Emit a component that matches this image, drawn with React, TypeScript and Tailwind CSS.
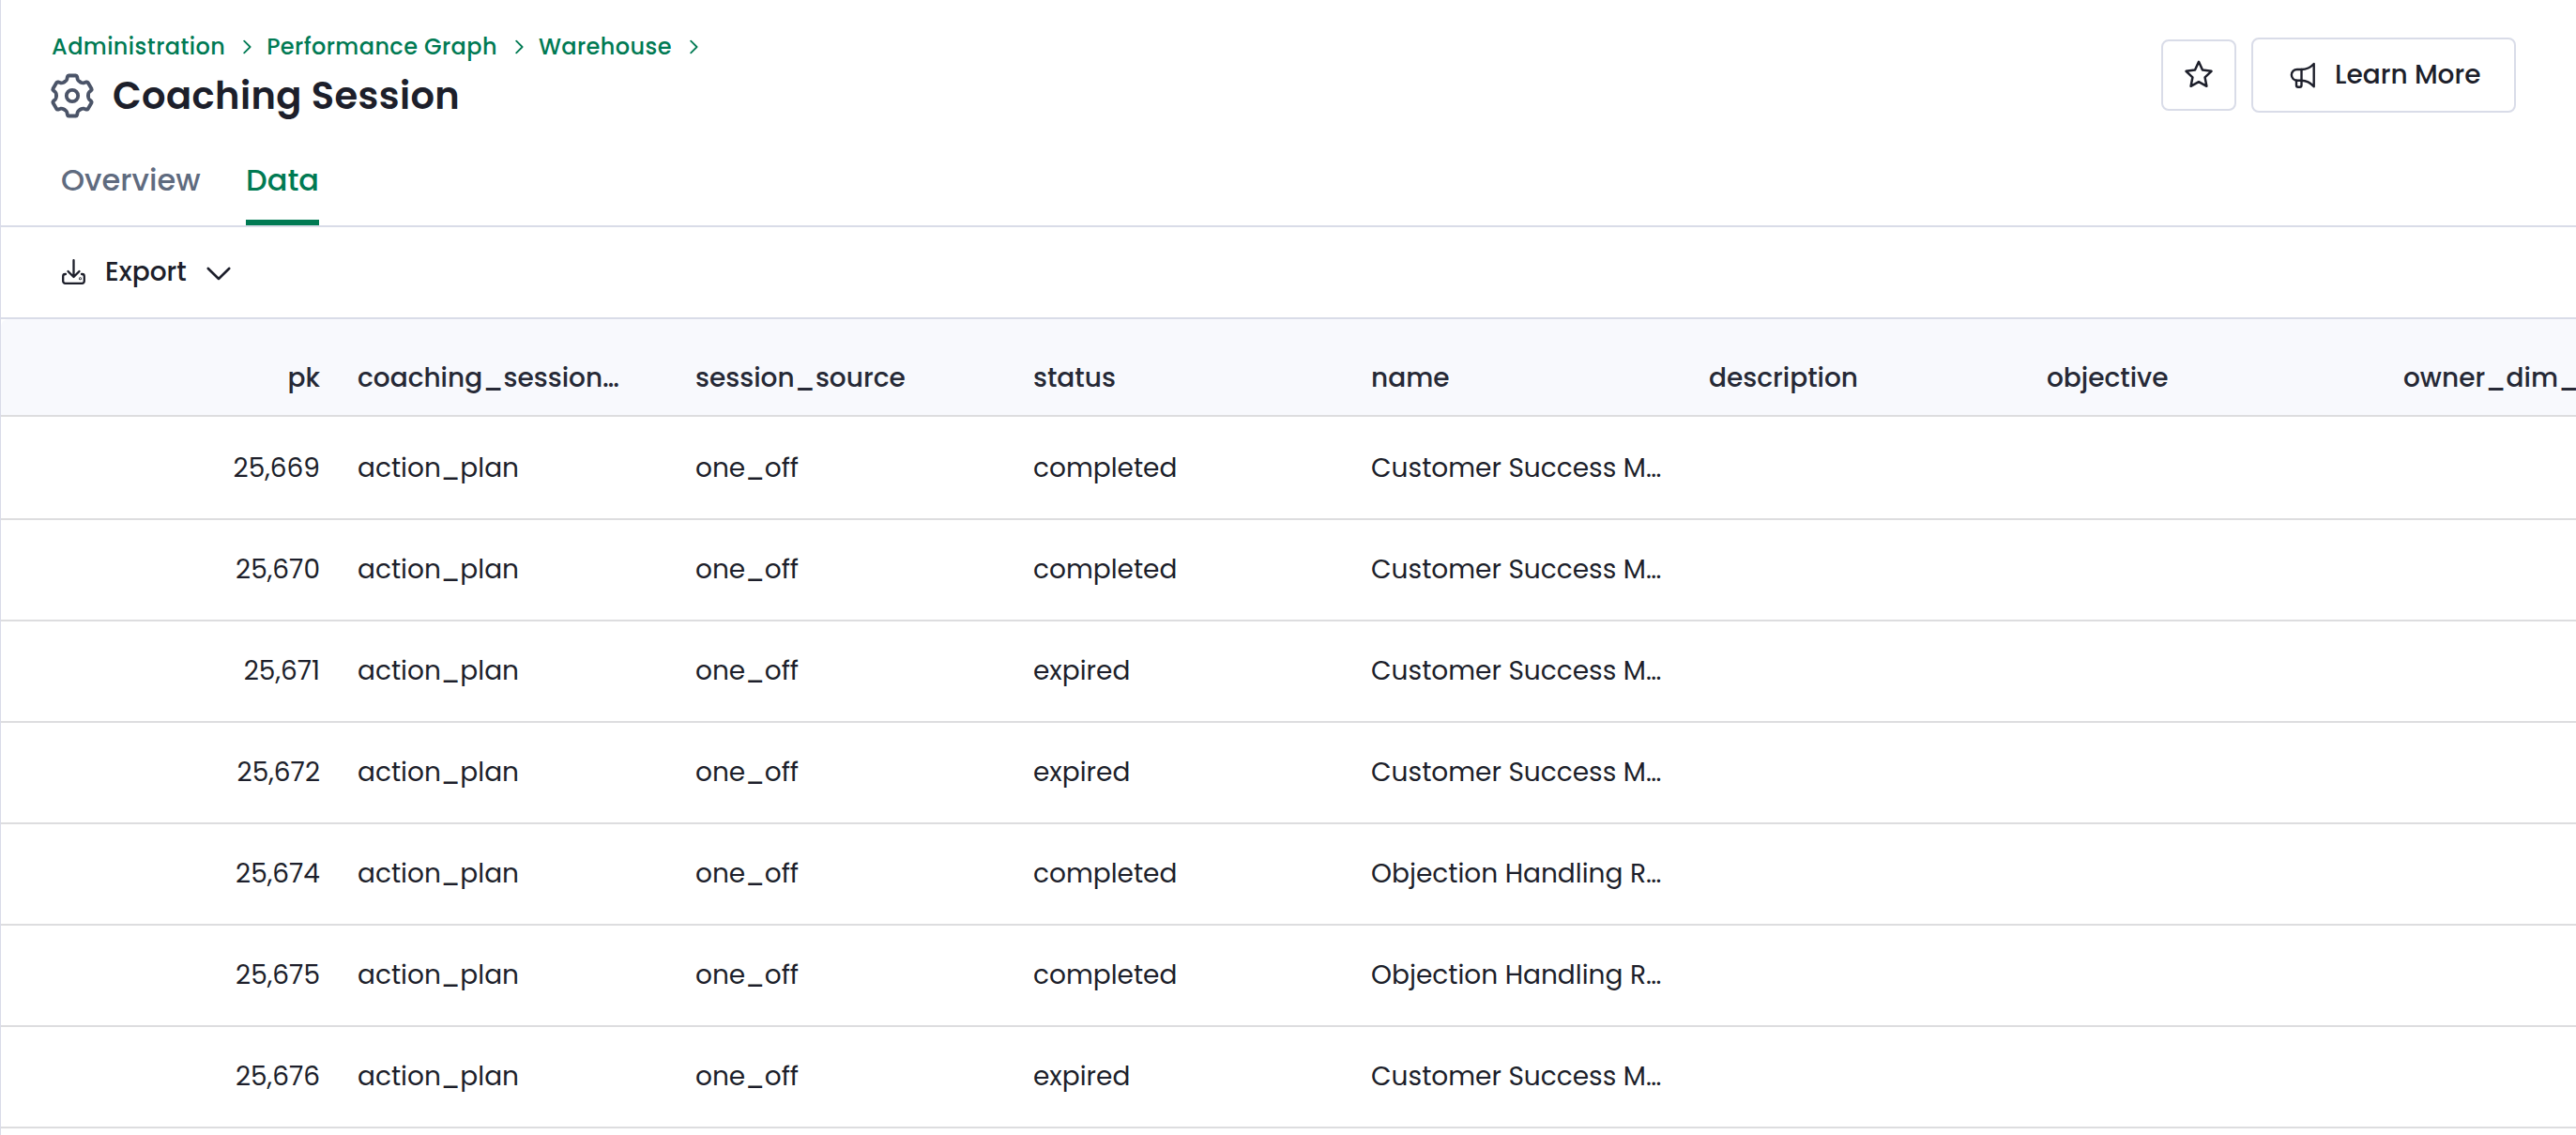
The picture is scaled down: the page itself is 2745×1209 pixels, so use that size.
import { useState } from 'react';
import type { ReactNode } from 'react';

type Row = {
  pk: string;
  type: string;
  source: string;
  status: string;
  name: string;
};

const rows: Row[] = [
  { pk: '25,669', type: 'action_plan', source: 'one_off', status: 'completed', name: 'Customer Success M…' },
  { pk: '25,670', type: 'action_plan', source: 'one_off', status: 'completed', name: 'Customer Success M…' },
  { pk: '25,671', type: 'action_plan', source: 'one_off', status: 'expired', name: 'Customer Success M…' },
  { pk: '25,672', type: 'action_plan', source: 'one_off', status: 'expired', name: 'Customer Success M…' },
  { pk: '25,674', type: 'action_plan', source: 'one_off', status: 'completed', name: 'Objection Handling R…' },
  { pk: '25,675', type: 'action_plan', source: 'one_off', status: 'completed', name: 'Objection Handling R…' },
  { pk: '25,676', type: 'action_plan', source: 'one_off', status: 'expired', name: 'Customer Success M…' },
];

const crumbs = ['Administration', 'Performance Graph', 'Warehouse'];

function CrumbChevron() {
  return (
    <svg className="mr-4 ml-[19px]" width="9" height="16" viewBox="0 0 9 16" fill="none" stroke="#007a53" strokeWidth="1.8" strokeLinecap="round" strokeLinejoin="round">
      <path d="M1.2 1.7L7.6 8l-6.4 6.3" />
    </svg>
  );
}

function GearIcon() {
  // one tooth, repeated every 60 degrees
  return (
    <svg width="48" height="48" viewBox="-24 -24 48 48" fill="none" stroke="#4b5468" strokeWidth="3.8" strokeLinecap="round" strokeLinejoin="round">
      {[0, 60, 120, 180, 240, 300].map((angle) => (
        <path
          key={angle}
          transform={`rotate(${angle})`}
          d="M-8.5 -14.7C-7 -15.6 -6 -16.2 -5.7 -17.5L-5.1 -20.4Q-4.8 -21.5 -3.8 -21.5L3.8 -21.5Q4.8 -21.5 5.1 -20.4L5.7 -17.5C6 -16.2 7 -15.6 8.5 -14.7"
        />
      ))}
      <circle r="6.2" />
    </svg>
  );
}

function StarIcon() {
  return (
    <svg width="32" height="32" viewBox="0 0 32 32" fill="none" stroke="#1d1f2b" strokeWidth="2.5" strokeLinejoin="round">
      <path d="M16 1.8l4 8.8 9.5 1.2-6.9 6.6 1.8 9.4-8.4-4.6-8.4 4.6 1.8-9.4-6.900-6.600 9.500-1.200z" />
    </svg>
  );
}

function MegaphoneIcon() {
  return (
    <svg width="28" height="28" viewBox="0 0 28 28" fill="none" stroke="#1d1f2b" strokeWidth="2.4" strokeLinecap="round" strokeLinejoin="round">
      <path d="M25.7 2v24.2C22 22 18 19.7 12.5 19.7H7.7a5.85 5.85 0 0 1 0-11.7H12.5C18 8 22 6 25.7 2z" />
      <path d="M12.5 8v11.7M7 19.7v5.1a2 2 0 0 0 2 2h1.5a2 2 0 0 0 2-2v-5.1" />
    </svg>
  );
}

function ExportIcon() {
  return (
    <svg width="26" height="28" viewBox="0 0 26 28" fill="none" stroke="#1d1f2b" strokeWidth="2.3" strokeLinecap="round" strokeLinejoin="round">
      <path d="M12.5 1.2v17.5M6.5 13l6 6 6-6" />
      <path d="M4 16H3.5a2.3 2.3 0 0 0-2.3 2.3v5.2a2.3 2.3 0 0 0 2.3 2.3h18a2.3 2.3 0 0 0 2.3-2.3v-5.2a2.3 2.3 0 0 0-2.3-2.3H21" />
      <circle cx="19.5" cy="20.8" r="0.4" />
    </svg>
  );
}

function Cell({ children, className = '' }: { children?: ReactNode; className?: string }) {
  return (
    <div className={`w-[360px] shrink-0 px-5 whitespace-nowrap ${className}`}>
      {children}
    </div>
  );
}

export default function App() {
  const [tab, setTab] = useState('Data');

  return (
    <div className="h-[1209px] w-[2745px] overflow-hidden border-l border-[#d9dbe8] bg-white font-[Poppins,Inter,sans-serif] text-[28px] leading-[40px] text-[#1d1f2b]">
      <header className="flex h-[150px] justify-between pt-[30px] pr-[64px] pl-[53px]">
        <div>
          <nav className="flex h-10 items-center pl-[1px] text-2xl leading-[40px] font-medium tracking-[0.4px] text-[#007a53]">
            {crumbs.map((crumb) => (
              <div key={crumb} className="flex items-center">
                <a className="whitespace-nowrap">{crumb}</a>
                <CrumbChevron />
              </div>
            ))}
          </nav>
          <div className="mt-[2px] flex items-center gap-[19px]">
            <div className="-ml-px">
              <GearIcon />
            </div>
            <h1 className="text-[40px] leading-[60px] font-semibold tracking-[0.4px] whitespace-nowrap">Coaching Session</h1>
          </div>
        </div>
        <div className="mt-[10px] flex h-20 items-center gap-4">
          <button className="flex h-[76px] w-20 items-center justify-center rounded-lg border-2 border-[#d9dce8]">
            <StarIcon />
          </button>
          <button className="flex h-20 w-[282px] items-center gap-5 rounded-lg border-2 border-[#d9dce8] pl-[39px] font-medium whitespace-nowrap">
            <MegaphoneIcon />
            Learn More
          </button>
        </div>
      </header>

      <div className="flex h-[92px] gap-12 border-b-2 border-[#d9dce8] pl-16 text-[32px] font-medium">
        {['Overview', 'Data'].map((item) => (
          <button
            key={item}
            onClick={() => setTab(item)}
            className={`flex h-[90px] pt-[22px] whitespace-nowrap ${
              tab === item ? 'w-[78px] border-b-6 border-[#007a53] text-[#007a53]' : 'w-[149px] text-[#5f6b7f]'
            }`}
          >
            {item}
          </button>
        ))}
      </div>

      <div className="flex h-[98px] items-center border-b-2 border-[#d9dce8] pl-[65px]">
        <button className="flex items-center font-medium">
          <ExportIcon />
          <span className="ml-5 w-[108px] text-left">Export</span>
          <svg className="mt-1" width="26" height="16" viewBox="0 0 26 16" fill="none" stroke="#1d1f2b" strokeWidth="2.6" strokeLinecap="round" strokeLinejoin="round">
            <path d="M1.8 2L13 13 24.2 2" />
          </svg>
        </button>
      </div>

      <div className="flex h-[104px] rounded-tl-lg border-b-2 border-[#dddddf] bg-[#f8f9fd] pt-[43px] font-medium text-[#262936]">
        <Cell className="text-right">pk</Cell>
        <Cell>coaching_session…</Cell>
        <Cell>session_source</Cell>
        <Cell>status</Cell>
        <Cell>name</Cell>
        <Cell>description</Cell>
        <Cell>objective</Cell>
        <Cell className="pl-10">owner_dim_user…</Cell>
      </div>

      <div className="pt-[2px]">
        {rows.map((row) => (
          <div key={row.pk} className="flex h-[108px] items-center border-b-2 border-[#dddddf]">
            <Cell className="text-right">{row.pk}</Cell>
            <Cell>{row.type}</Cell>
            <Cell>{row.source}</Cell>
            <Cell>{row.status}</Cell>
            <Cell>{row.name}</Cell>
          </div>
        ))}
      </div>
    </div>
  );
}
